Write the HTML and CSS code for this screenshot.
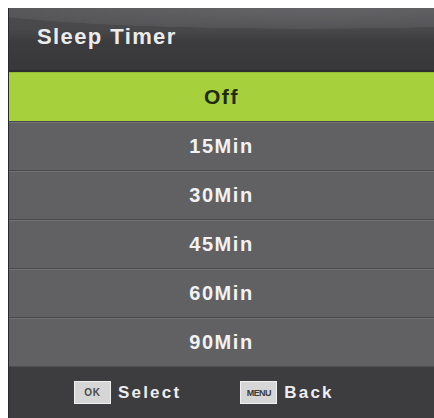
FILE: index.html
```html
<!DOCTYPE html>
<html>
<head>
<meta charset="utf-8">
<link rel="stylesheet" href="styles.css">
</head>
<body>
<div class="panel">
  <div class="header"><span class="title">Sleep Timer</span></div>
  <div class="list">
    <div class="item selected">Off</div>
    <div class="item">15Min</div>
    <div class="item">30Min</div>
    <div class="item">45Min</div>
    <div class="item">60Min</div>
    <div class="item">90Min</div>
  </div>
  <div class="footer">
    <div class="hint"><span class="key">OK</span><span class="label">Select</span></div>
    <div class="hint"><span class="key menu">MENU</span><span class="label">Back</span></div>
  </div>
</div>
</body>
</html>
```
FILE: styles.css
```css
html, body {
  margin: 0;
  padding: 0;
  background: #ffffff;
}
body {
  padding: 8px 0 0 8px;
  font-family: "Liberation Sans", Arial, sans-serif;
}
.panel {
  width: 426px;
  height: 410px;
  display: flex;
  flex-direction: column;
  background: #3f3f41;
  border-left: 1px solid #2a2a2c;
  box-sizing: border-box;
}
.header {
  height: 64px;
  display: flex;
  align-items: center;
  padding-left: 28px;
  background:
    radial-gradient(ellipse 140% 60% at 70% 0%, rgba(120,120,124,0.55) 0%, rgba(120,120,124,0.25) 55%, rgba(0,0,0,0) 56%),
    linear-gradient(#4c4c4f 0%, #48484b 35%, #3c3c3e 55%, #38383a 100%);
  box-sizing: border-box;
  border-bottom: 2px solid #2e2e30;
}
.title {
  color: #ececec;
  font-weight: bold;
  font-size: 22px;
  letter-spacing: 1.4px;
  margin-top: -5px;
}
.list {
  display: flex;
  flex-direction: column;
}
.item {
  height: 49px;
  display: flex;
  align-items: center;
  justify-content: center;
  background: #616164;
  color: #f2f2f2;
  font-weight: bold;
  font-size: 20px;
  letter-spacing: 1.6px;
  box-sizing: border-box;
  border-top: 1px solid #4a4a4d;
  box-shadow: inset 0 1px 0 #727275;
}
.item.selected {
  background: #a6d03c;
  color: #1f2a10;
  border-top: 1px solid #93bd30;
  box-shadow: none;
  font-size: 21px;
}
.footer {
  flex: 1;
  display: flex;
  align-items: center;
  padding-left: 65px;
  gap: 59px;
  background: #3d3d40;
  border-top: 1px solid #4e4e51;
}
.hint {
  display: flex;
  align-items: center;
  gap: 7px;
}
.key {
  display: inline-flex;
  align-items: center;
  justify-content: center;
  width: 37px;
  height: 23px;
  background: #d6d6d6;
  color: #4a4a4a;
  font-size: 10px;
  font-weight: bold;
  border: 1px solid #f0f0f0;
  box-sizing: border-box;
  letter-spacing: 0.8px;
}
.key.menu {
  font-size: 9px;
  letter-spacing: -0.6px;
  color: #3a3a3a;
}
.label {
  color: #eeeeee;
  font-weight: bold;
  font-size: 17px;
  letter-spacing: 2.2px;
}
```
